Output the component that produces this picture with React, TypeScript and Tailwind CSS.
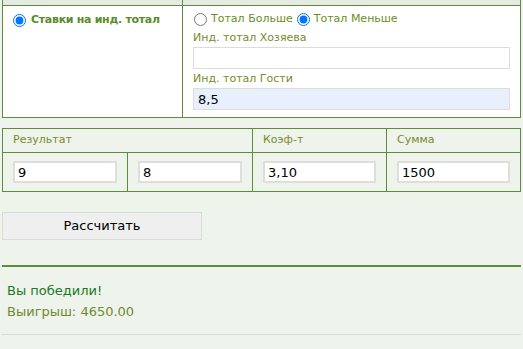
import React from "react";

const FONT = { fontFamily: '"DejaVu Sans", Verdana, sans-serif' };

export default function App() {
  return (
    <div className="min-h-screen bg-[#eef3ec] pl-[2px] pr-[2px]" style={FONT}>
      {/* Bet type table */}
      <div className="border-x border-b border-[#5e8c3a] bg-white">
        <div className="flex h-[6px] border-b border-[#5e8c3a] bg-[#e5eae2]">
          <div className="w-[180px] border-r border-[#5e8c3a]" />
          <div className="flex-1" />
        </div>
        <div className="flex">
          <div className="w-[180px] border-r border-[#5e8c3a] pl-[10px] pt-[6px]">
            <label className="flex items-center gap-[5px] text-[11px] font-bold tracking-[-0.3px] text-[#5b8c2a]">
              <input type="radio" defaultChecked className="m-0 h-[13px] w-[13px]" />
              Ставки на инд. тотал
            </label>
          </div>
          <div className="flex-1 px-[10px] pt-[4px] pb-[7px]">
            <div className="flex h-[18px] items-center text-[11px] text-[#6b8e23]">
              <label className="flex items-center gap-[4px]">
                <input type="radio" name="t" className="m-0 ml-[1px] h-[13px] w-[13px]" />
                Тотал Больше
              </label>
              <label className="ml-[4px] flex items-center gap-[4px]">
                <input type="radio" name="t" defaultChecked className="m-0 h-[13px] w-[13px]" />
                Тотал Меньше
              </label>
            </div>
            <div className="mt-[2px] h-[16px] text-[11px] leading-[16px] text-[#7a8a2a]">Инд. тотал Хозяева</div>
            <input
              className="mt-[1px] block h-[22px] w-full border border-[#dcdcdc] bg-white px-[4px] text-[13px] outline-none"
              defaultValue=""
            />
            <div className="mt-[2px] h-[16px] text-[11px] leading-[16px] text-[#7a8a2a]">Инд. тотал Гости</div>
            <input
              className="mt-[1px] block h-[22px] w-full border border-[#dcdcdc] bg-[#e8f0fe] px-[4px] text-[13px] text-black outline-none"
              defaultValue="8,5"
            />
          </div>
        </div>
      </div>

      {/* Result table */}
      <div className="mt-[10px] grid grid-cols-[125px_125px_134px_1fr] border border-[#5e8c3a]">
        <div className="col-span-2 flex h-[24px] items-center border-r border-b border-[#5e8c3a] pl-[10px] text-[11px] text-[#7a8a2a]">
          Результат
        </div>
        <div className="flex h-[24px] items-center border-r border-b border-[#5e8c3a] pl-[10px] text-[11px] text-[#7a8a2a]">
          Коэф-т
        </div>
        <div className="flex h-[24px] items-center border-b border-[#5e8c3a] pl-[10px] text-[11px] text-[#7a8a2a]">
          Сумма
        </div>
        {["9", "8", "3,10", "1500"].map((v, i) => (
          <div key={i} className={`px-[10px] py-[8px] ${i < 3 ? "border-r border-[#5e8c3a]" : ""}`}>
            <input
              className="block h-[22px] w-full border-2 border-[#dedede] bg-white px-[3px] text-[13px] text-black outline-none"
              defaultValue={v}
            />
          </div>
        ))}
      </div>

      <button className="mt-[20px] block h-[28px] w-[200px] border border-[#dadada] bg-[#efefef] text-[13px] text-black">
        Рассчитать
      </button>

      <div className="mt-[25px] h-[2px] bg-[#5e8c3a]" />

      <div className="mt-[13px] pl-[5px] text-[13px] leading-[21px]">
        <div className="text-[#1a7a22]">Вы победили!</div>
        <div className="text-[#6f8a2e]">Выигрыш: 4650.00</div>
      </div>

      <div className="mt-[12px] h-px bg-[#dadada]" />
    </div>
  );
}
